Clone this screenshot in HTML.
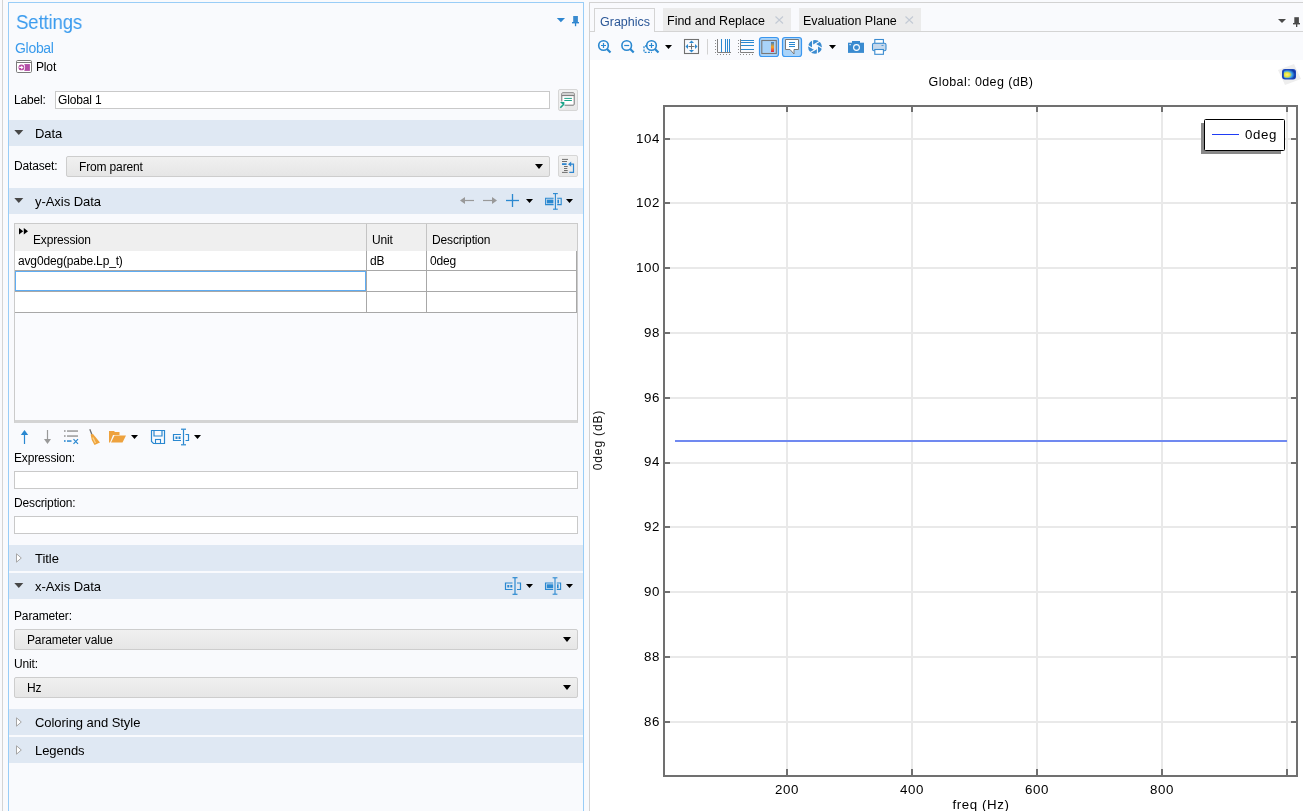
<!DOCTYPE html>
<html><head><meta charset="utf-8">
<style>
*{margin:0;padding:0;box-sizing:border-box}
html,body{width:1303px;height:811px;overflow:hidden;background:#f9fafd;font-family:"Liberation Sans",sans-serif;font-size:12px;color:#000;letter-spacing:-0.15px}
.a{position:absolute}
.t{position:absolute;white-space:nowrap;line-height:1;will-change:transform}
.hdr{position:absolute;left:9px;width:574px;height:26px;background:#dfe8f3}
.box{position:absolute;background:#fff;border:1px solid #c9c9c9}
.cmb{position:absolute;border:1px solid #cdcdcd;border-radius:2px;background:linear-gradient(#f0f0f0,#e6e6e6)}
.tri{position:absolute;width:0;height:0;border-left:4.5px solid transparent;border-right:4.5px solid transparent;border-top:5px solid #000}
.pl{font-size:13.3px;color:#000;letter-spacing:0.6px}
.hd-tri{position:absolute;width:0;height:0;border-left:5px solid transparent;border-right:5px solid transparent;border-top:6px solid #595959}
.hd-tri-r{position:absolute;width:0;height:0;border-top:5px solid transparent;border-bottom:5px solid transparent;border-left:6px solid #bdbdbd}
</style></head><body>
<!-- left outer gray line -->
<div class="a" style="left:2px;top:0;width:1px;height:811px;background:#d4d4d4"></div>
<!-- left panel -->
<div class="a" style="left:8px;top:2px;width:576px;height:830px;border:1px solid #99cdf7;background:#f9fafd"></div>
<div class="t" style="left:16px;top:11px;font-size:21px;color:#3a9bee;transform:scaleX(0.885);transform-origin:0 0">Settings</div>
<div class="t" style="left:15px;top:41px;font-size:14px;color:#3a9bec;letter-spacing:-0.3px">Global</div>
<div class="t" style="left:36px;top:61px">Plot</div>

<div class="t" style="left:14px;top:94px">Label:</div>
<div class="box" style="left:55px;top:91px;width:495px;height:18px"></div>
<div class="t" style="left:58px;top:94px">Global 1</div>

<div class="hdr" style="top:120px"></div>
<svg class="a" style="left:14px;top:129px" width="10" height="8"><path d="M0.3 1 L9.3 1 L4.8 6 Z" fill="#474747"/></svg>
<div class="t" style="left:35px;top:127px;font-size:13px;letter-spacing:-0.05px">Data</div>

<div class="t" style="left:14px;top:160px">Dataset:</div>
<div class="cmb" style="left:66px;top:156px;width:484px;height:21px"></div>
<div class="t" style="left:79px;top:161px">From parent</div>
<div class="tri" style="left:535px;top:164px"></div>

<div class="hdr" style="top:188px"></div>
<svg class="a" style="left:14px;top:197px" width="10" height="8"><path d="M0.3 1 L9.3 1 L4.8 6 Z" fill="#474747"/></svg>
<div class="t" style="left:35px;top:195px;font-size:13px;letter-spacing:-0.05px">y-Axis Data</div>


<!-- y-axis header icons -->
<svg class="a" style="left:455px;top:190px" width="125" height="22" viewBox="0 0 125 22">
 <g fill="#999" stroke="#999">
  <line x1="8" y1="10.5" x2="19" y2="10.5" stroke-width="1.2"/>
  <path d="M5 10.5 L10 7 L10 14 Z" stroke="none"/>
  <line x1="28" y1="10.5" x2="38" y2="10.5" stroke-width="1.2"/>
  <path d="M42 10.5 L37 7 L37 14 Z" stroke="none"/>
 </g>
 <g stroke="#2a88d0" stroke-width="1.3">
  <line x1="51" y1="10.5" x2="64" y2="10.5"/>
  <line x1="57.5" y1="4" x2="57.5" y2="17"/>
 </g>
 <path d="M71 9 L78 9 L74.5 13 Z" fill="#000"/>
 <g fill="none" stroke="#2a88d0" stroke-width="1.1">
  <path d="M98.6 8.3 H90.6 V14.6 H98.6"/>
  <path d="M102.2 8.3 H106.2 V14.6 H102.2"/>
  <line x1="100.4" y1="3.6" x2="100.4" y2="19.2"/>
  <line x1="98" y1="3.6" x2="102.8" y2="3.6"/>
  <line x1="98" y1="19.2" x2="102.8" y2="19.2"/>
 </g>
 <rect x="91.8" y="9.6" width="6.6" height="3.8" fill="#2a88d0"/>
 <rect x="102.4" y="9.6" width="1.6" height="3.8" fill="#2a88d0"/>
 <path d="M111 9 L118 9 L114.5 13 Z" fill="#000"/>
</svg>

<!-- table -->
<div class="a" style="left:14px;top:223px;width:564px;height:200px;border:1px solid #cbcbcb;border-bottom:3px solid #d4d4d4;background:#fafbfe"></div>
<div class="a" style="left:15px;top:224px;width:562px;height:27px;background:#efefef"></div>
<div class="a" style="left:15px;top:251px;width:562px;height:62px;background:#fff"></div>
<div class="a" style="left:366px;top:224px;width:1px;height:88px;background:#c4c4c4"></div>
<div class="a" style="left:426px;top:224px;width:1px;height:88px;background:#c4c4c4"></div>
<div class="a" style="left:576px;top:251px;width:1px;height:62px;background:#a8a8a8"></div>
<div class="a" style="left:15px;top:270px;width:562px;height:1px;background:#a8a8a8"></div>
<div class="a" style="left:15px;top:291px;width:562px;height:1px;background:#a8a8a8"></div>
<div class="a" style="left:15px;top:312px;width:562px;height:1px;background:#a8a8a8"></div>
<div class="a" style="left:366px;top:251px;width:1px;height:62px;background:#a8a8a8"></div>
<div class="a" style="left:426px;top:251px;width:1px;height:62px;background:#a8a8a8"></div>
<div class="a" style="left:15px;top:271px;width:351px;height:20px;border:1.5px solid #5eacf2;background:#fff"></div>
<svg class="a" style="left:18px;top:228px" width="12" height="8"><path d="M1 0 L5.2 3.3 L1 6.6Z M5.8 0 L10 3.3 L5.8 6.6Z" fill="#000"/></svg>
<div class="t" style="left:33px;top:234px">Expression</div>
<div class="t" style="left:372px;top:234px">Unit</div>
<div class="t" style="left:432px;top:234px">Description</div>
<div class="t" style="left:18px;top:255px">avg0deg(pabe.Lp_t)</div>
<div class="t" style="left:370px;top:255px">dB</div>
<div class="t" style="left:430px;top:255px">0deg</div>

<div class="t" style="left:14px;top:452px">Expression:</div>
<div class="box" style="left:14px;top:471px;width:564px;height:18px"></div>
<div class="t" style="left:14px;top:497px">Description:</div>
<div class="box" style="left:14px;top:516px;width:564px;height:18px"></div>

<div class="hdr" style="top:545px"></div>
<svg class="a" style="left:15px;top:553px" width="8" height="11"><path d="M1.5 0.8 L6.3 5 L1.5 9.2 Z" fill="#fff" stroke="#a6a6a6" stroke-width="1"/></svg>
<div class="t" style="left:35px;top:552px;font-size:13px;letter-spacing:-0.05px">Title</div>

<div class="hdr" style="top:573px"></div>
<svg class="a" style="left:14px;top:582px" width="10" height="8"><path d="M0.3 1 L9.3 1 L4.8 6 Z" fill="#474747"/></svg>
<div class="t" style="left:35px;top:580px;font-size:13px;letter-spacing:-0.05px">x-Axis Data</div>

<div class="t" style="left:14px;top:610px">Parameter:</div>
<div class="cmb" style="left:14px;top:629px;width:564px;height:21px"></div>
<div class="t" style="left:27px;top:634px">Parameter value</div>
<div class="tri" style="left:563px;top:637px"></div>

<div class="t" style="left:14px;top:658px">Unit:</div>
<div class="cmb" style="left:14px;top:677px;width:564px;height:21px"></div>
<div class="t" style="left:27px;top:682px">Hz</div>
<div class="tri" style="left:563px;top:685px"></div>

<div class="hdr" style="top:709px"></div>
<svg class="a" style="left:15px;top:717px" width="8" height="11"><path d="M1.5 0.8 L6.3 5 L1.5 9.2 Z" fill="#fff" stroke="#a6a6a6" stroke-width="1"/></svg>
<div class="t" style="left:35px;top:716px;font-size:13px;letter-spacing:-0.05px">Coloring and Style</div>

<div class="hdr" style="top:737px"></div>
<svg class="a" style="left:15px;top:745px" width="8" height="11"><path d="M1.5 0.8 L6.3 5 L1.5 9.2 Z" fill="#fff" stroke="#a6a6a6" stroke-width="1"/></svg>
<div class="t" style="left:35px;top:744px;font-size:13px;letter-spacing:-0.05px">Legends</div>


<!-- settings dropdown + pin -->
<svg class="a" style="left:550px;top:8px" width="36" height="24" viewBox="0 0 36 24">
 <path d="M6.8 10 L15 10 L10.9 14.2 Z" fill="#2e86d0"/>
 <rect x="23.2" y="8" width="4.7" height="6.5" fill="#3a8bd0"/>
 <rect x="22" y="14" width="7" height="1.4" fill="#2e86d0"/>
 <rect x="24.9" y="15" width="1.3" height="3.2" fill="#2e86d0"/>
</svg>
<!-- plot icon -->
<svg class="a" style="left:16px;top:60px" width="16" height="13" viewBox="0 0 16 13">
 <rect x="0.5" y="0.5" width="15" height="12" rx="1.2" fill="#fff" stroke="#7b7b7b" stroke-width="1"/>
 <line x1="0.5" y1="2.5" x2="15.5" y2="2.5" stroke="#7b7b7b" stroke-width="1"/>
 <rect x="8.3" y="4.1" width="5.6" height="6.8" fill="#b24ea6"/>
 <circle cx="5.4" cy="7.4" r="3.7" fill="#fff"/>
 <circle cx="5.4" cy="7.4" r="2.9" fill="#b6479f"/>
 <path d="M3.3 6.8 H5.2 V5.4 L7.6 7.4 L5.2 9.4 V8 H3.3 Z" fill="#fff"/>
</svg>
<!-- label button -->
<div class="a" style="left:558px;top:89px;width:20px;height:22px;border:1px solid #d6d6d6;border-radius:2px;background:linear-gradient(#f2f2f2,#e8e8e8)"></div>
<svg class="a" style="left:558px;top:89px" width="20" height="22" viewBox="0 0 20 22">
 <rect x="3.8" y="3.8" width="12.4" height="12.4" rx="1" fill="#fff" stroke="#767676" stroke-width="1"/>
 <rect x="4.3" y="4.3" width="11.4" height="2" fill="#cfcfcf"/>
 <line x1="3.8" y1="6.6" x2="16.2" y2="6.6" stroke="#767676" stroke-width="1"/>
 <line x1="6.3" y1="9.4" x2="13.9" y2="9.4" stroke="#1ca58a" stroke-width="1"/>
 <line x1="6.3" y1="11.5" x2="13.9" y2="11.5" stroke="#1ca58a" stroke-width="1"/>
 <rect x="1.5" y="12.5" width="5.5" height="7" fill="#f4f4f4"/>
 <path d="M2.3 18.8 L5 16" stroke="#1ca58a" stroke-width="1.6"/>
 <path d="M2 13 L6.3 13 L6.3 17.3 Z" fill="#1ca58a"/>
</svg>
<!-- dataset button -->
<div class="a" style="left:558px;top:155px;width:20px;height:22px;border:1px solid #d6d6d6;border-radius:2px;background:linear-gradient(#f2f2f2,#e8e8e8)"></div>
<svg class="a" style="left:558px;top:155px" width="20" height="22" viewBox="0 0 20 22">
 <g stroke="#6e6e6e" stroke-width="1">
  <line x1="4" y1="4.4" x2="10" y2="4.4"/>
  <line x1="4" y1="6.5" x2="9" y2="6.5"/>
  <line x1="6" y1="11.5" x2="9.7" y2="11.5"/>
  <line x1="6" y1="13.5" x2="9.3" y2="13.5"/>
  <line x1="6" y1="15.5" x2="9.7" y2="15.5"/>
  <line x1="4" y1="17.4" x2="9.7" y2="17.4"/>
 </g>
 <line x1="4" y1="9.1" x2="8.6" y2="9.1" stroke="#2e86d0" stroke-width="1.8"/>
 <path d="M12.5 9.2 H15.5 V17.4 H11.3" fill="none" stroke="#2e86d0" stroke-width="1.2"/>
 <path d="M10 9.2 L13.2 6.6 L13.2 11.8 Z" fill="#2e86d0"/>
</svg>

<!-- under-table icons -->
<svg class="a" style="left:15px;top:426px" width="190" height="22" viewBox="0 0 190 22">
 <path d="M9.5 4 L13.2 9 L5.8 9 Z" fill="#2a88d0"/>
 <line x1="9.5" y1="8" x2="9.5" y2="18" stroke="#2a88d0" stroke-width="1.2"/>
 <line x1="32.5" y1="4" x2="32.5" y2="14" stroke="#999" stroke-width="1.2"/>
 <path d="M32.5 18 L36 13 L29 13 Z" fill="#999"/>
 <g fill="#9a9a9a">
  <rect x="49" y="4.2" width="1.6" height="1.6"/><rect x="52" y="4.3" width="11" height="1.5"/>
  <rect x="49" y="9.2" width="1.6" height="1.6"/><rect x="52" y="9.3" width="11" height="1.5"/>
 </g>
 <g fill="#2a88d0">
  <rect x="49" y="14.2" width="1.6" height="1.6"/><rect x="52" y="14.3" width="4.5" height="1.5"/>
 </g>
 <path d="M58.5 13.2 L63 17.8 M63 13.2 L58.5 17.8" stroke="#2a88d0" stroke-width="1.2"/>
 <line x1="74.8" y1="3.3" x2="77" y2="8.8" stroke="#6e6e6e" stroke-width="1.3"/>
 <path d="M75.6 8.6 L78 8 L85 16.5 L79.5 18.9 L76.8 14 Z" fill="#efa43c"/>
 <path d="M77.8 11.5 L80.5 17" stroke="#fcd38e" stroke-width="1.3"/>
 <path d="M94 5 H99 L100 6 H104.5 V9 H98 L95 16.5 H94 Z" fill="#eea23e"/>
 <path d="M96 16.5 L99.5 9.5 H111 L107.5 16.5 Z" fill="#eea23e"/>
 <path d="M116 9 L123 9 L119.5 13 Z" fill="#000"/>
 <path d="M136.5 4.5 H149.5 V17.5 H138.5 L136.5 15.5 Z" fill="none" stroke="#2a88d0" stroke-width="1.2"/>
 <path d="M139 4.5 V10 H147 V4.5" fill="none" stroke="#2a88d0" stroke-width="1.2"/>
 <rect x="140.5" y="13.5" width="5" height="4" fill="none" stroke="#2a88d0" stroke-width="1.1"/>
 <g fill="none" stroke="#2a88d0" stroke-width="1.2">
  <path d="M166 8.5 H158.5 V14.5 H166"/>
  <path d="M170.5 8.5 H173.5 V14.5 H170.5"/>
  <line x1="168.5" y1="3.5" x2="168.5" y2="18.5"/>
  <line x1="166" y1="3.2" x2="171" y2="3.2"/>
  <line x1="166" y1="18.8" x2="171" y2="18.8"/>
 </g>
 <rect x="160.5" y="10.5" width="2" height="2.5" fill="#2a88d0"/>
 <rect x="163.5" y="10.5" width="2" height="2.5" fill="#2a88d0"/>
 <path d="M179 9 L186 9 L182.5 13 Z" fill="#000"/>
</svg>

<!-- x-axis header icons -->
<svg class="a" style="left:500px;top:575px" width="80" height="22" viewBox="0 0 80 22">
 <g fill="none" stroke="#2a88d0" stroke-width="1.2">
  <path d="M12.5 8 H5.5 V14.5 H12.5"/>
  <path d="M17 8 H20.5 V14.5 H17"/>
  <line x1="15" y1="3" x2="15" y2="19"/>
  <line x1="12.5" y1="2.7" x2="17.5" y2="2.7"/>
  <line x1="12.5" y1="19.3" x2="17.5" y2="19.3"/>
 </g>
 <rect x="7.3" y="10" width="2" height="2.5" fill="#2a88d0"/>
 <rect x="10.3" y="10" width="2" height="2.5" fill="#2a88d0"/>
 <path d="M26 9 L33 9 L29.5 13 Z" fill="#000"/>
 <g fill="none" stroke="#2a88d0" stroke-width="1.1">
  <path d="M53.2 8 H45.5 V14.4 H53.2"/>
  <path d="M56.8 8 H60.6 V14.4 H56.8"/>
  <line x1="55" y1="3" x2="55" y2="19"/>
  <line x1="52.6" y1="2.8" x2="57.4" y2="2.8"/>
  <line x1="52.6" y1="19.2" x2="57.4" y2="19.2"/>
 </g>
 <rect x="46.7" y="9.3" width="6.5" height="3.8" fill="#2a88d0"/>
 <rect x="57" y="9.3" width="1.6" height="3.8" fill="#2a88d0"/>
 <path d="M66 9 L73 9 L69.5 13 Z" fill="#000"/>
</svg>

<!-- right panel -->
<div class="a" style="left:589px;top:2px;width:720px;height:830px;border:1px solid #d2d2d2;background:#f9fafd"></div>
<svg class="a" style="left:590px;top:60px" width="713" height="751" viewBox="590 60 713 751">
<rect x="590" y="60" width="713" height="751" fill="#fff"/>
<rect x="665" y="138" width="632" height="2" fill="#e9e9e9"/>
<rect x="665" y="202" width="632" height="2" fill="#e9e9e9"/>
<rect x="665" y="267" width="632" height="2" fill="#e9e9e9"/>
<rect x="665" y="332" width="632" height="2" fill="#e9e9e9"/>
<rect x="665" y="397" width="632" height="2" fill="#e9e9e9"/>
<rect x="665" y="462" width="632" height="2" fill="#e9e9e9"/>
<rect x="665" y="526" width="632" height="2" fill="#e9e9e9"/>
<rect x="665" y="591" width="632" height="2" fill="#e9e9e9"/>
<rect x="665" y="656" width="632" height="2" fill="#e9e9e9"/>
<rect x="665" y="721" width="632" height="2" fill="#e9e9e9"/>
<rect x="786" y="107" width="2" height="668" fill="#e9e9e9"/>
<rect x="911" y="107" width="2" height="668" fill="#e9e9e9"/>
<rect x="1036" y="107" width="2" height="668" fill="#e9e9e9"/>
<rect x="1161" y="107" width="2" height="668" fill="#e9e9e9"/>
<rect x="1286" y="107" width="2" height="668" fill="#e9e9e9"/>
<rect x="675" y="440" width="612" height="2" fill="#7089f0"/>
<rect x="664" y="106" width="633" height="670" fill="none" stroke="#707070" stroke-width="2"/>
<rect x="665" y="138" width="5" height="2" fill="#707070"/>
<rect x="1291" y="138" width="6" height="2" fill="#707070"/>
<rect x="665" y="202" width="5" height="2" fill="#707070"/>
<rect x="1291" y="202" width="6" height="2" fill="#707070"/>
<rect x="665" y="267" width="5" height="2" fill="#707070"/>
<rect x="1291" y="267" width="6" height="2" fill="#707070"/>
<rect x="665" y="332" width="5" height="2" fill="#707070"/>
<rect x="1291" y="332" width="6" height="2" fill="#707070"/>
<rect x="665" y="397" width="5" height="2" fill="#707070"/>
<rect x="1291" y="397" width="6" height="2" fill="#707070"/>
<rect x="665" y="462" width="5" height="2" fill="#707070"/>
<rect x="1291" y="462" width="6" height="2" fill="#707070"/>
<rect x="665" y="526" width="5" height="2" fill="#707070"/>
<rect x="1291" y="526" width="6" height="2" fill="#707070"/>
<rect x="665" y="591" width="5" height="2" fill="#707070"/>
<rect x="1291" y="591" width="6" height="2" fill="#707070"/>
<rect x="665" y="656" width="5" height="2" fill="#707070"/>
<rect x="1291" y="656" width="6" height="2" fill="#707070"/>
<rect x="665" y="721" width="5" height="2" fill="#707070"/>
<rect x="1291" y="721" width="6" height="2" fill="#707070"/>
<rect x="786" y="107" width="2" height="5" fill="#707070"/>
<rect x="786" y="769" width="2" height="6" fill="#707070"/>
<rect x="911" y="107" width="2" height="5" fill="#707070"/>
<rect x="911" y="769" width="2" height="6" fill="#707070"/>
<rect x="1036" y="107" width="2" height="5" fill="#707070"/>
<rect x="1036" y="769" width="2" height="6" fill="#707070"/>
<rect x="1161" y="107" width="2" height="5" fill="#707070"/>
<rect x="1161" y="769" width="2" height="6" fill="#707070"/>
<rect x="1286" y="107" width="2" height="5" fill="#707070"/>
<rect x="1286" y="769" width="2" height="6" fill="#707070"/>
</svg>
<div class="t pl" style="right:643.4px;top:131.8px">104</div>
<div class="t pl" style="right:643.4px;top:195.8px">102</div>
<div class="t pl" style="right:643.4px;top:260.8px">100</div>
<div class="t pl" style="right:643.4px;top:325.8px">98</div>
<div class="t pl" style="right:643.4px;top:390.8px">96</div>
<div class="t pl" style="right:643.4px;top:454.8px">94</div>
<div class="t pl" style="right:643.4px;top:519.8px">92</div>
<div class="t pl" style="right:643.4px;top:584.8px">90</div>
<div class="t pl" style="right:643.4px;top:649.8px">88</div>
<div class="t pl" style="right:643.4px;top:714.8px">86</div>
<div class="t pl" style="left:747px;width:80px;text-align:center;top:783px">200</div>
<div class="t pl" style="left:872px;width:80px;text-align:center;top:783px">400</div>
<div class="t pl" style="left:997px;width:80px;text-align:center;top:783px">600</div>
<div class="t pl" style="left:1122px;width:80px;text-align:center;top:783px">800</div>
<div class="t pl" style="left:881px;width:200px;text-align:center;top:798px">freq (Hz)</div>
<div class="t pl" style="left:881px;width:200px;text-align:center;top:76px;font-size:12.5px;letter-spacing:0.4px">Global: 0deg (dB)</div>
<div class="t pl" style="left:548px;top:434px;width:100px;text-align:center;font-size:12px;letter-spacing:0.85px;color:#111;transform:rotate(-90deg)">0deg (dB)</div>
<div class="a" style="left:1201px;top:123px;width:80px;height:31px;background:#888"></div>
<div class="a" style="left:1204px;top:119px;width:81px;height:32px;border:1.5px solid #000;border-radius:1.5px;background:#fff"></div>
<div class="a" style="left:1212px;top:134px;width:27px;height:1px;background:#1f3cf5"></div>
<div class="t pl" style="left:1245px;top:128px">0deg</div>
<svg class="a" style="left:1276px;top:60px" width="27" height="28" viewBox="0 0 27 28">
 <path d="M2 10 L18 4 L25 19 L9 25 Z" fill="#eeeeee"/>
 <defs>
  <radialGradient id="ig" cx="0.3" cy="0.55" r="0.75"><stop offset="0" stop-color="#fff27a"/><stop offset="0.35" stop-color="#e6e23a"/><stop offset="0.6" stop-color="#3fa6ef"/><stop offset="1" stop-color="#0a2a9a"/></radialGradient>
 </defs>
 <rect x="6" y="9" width="14" height="10.5" rx="3" fill="#1c47b8"/>
 <rect x="7.8" y="10.3" width="11" height="8" rx="1.8" fill="url(#ig)"/>
</svg>

<!-- tabs -->
<div class="a" style="left:590px;top:31px;width:713px;height:1px;background:#d4d4d4"></div>
<div class="a" style="left:594px;top:8px;width:61px;height:24px;border:1px solid #d4d4d4;border-bottom:none;background:#f9fafd"></div>
<div class="t" style="left:600px;top:16px;font-size:12.5px;letter-spacing:0;color:#2b5797">Graphics</div>
<div class="a" style="left:663px;top:8px;width:128px;height:23px;background:#ebebeb"></div>
<div class="t" style="left:667px;top:15px;font-size:12.5px;letter-spacing:0">Find and Replace</div>
<svg class="a" style="left:775px;top:16px" width="9" height="8"><path d="M0.5 0.5 L8 7.5 M8 0.5 L0.5 7.5" stroke="#c3cad4" stroke-width="1.1"/></svg>
<div class="a" style="left:799px;top:8px;width:122px;height:23px;background:#ebebeb"></div>
<div class="t" style="left:803px;top:15px;font-size:12.5px;letter-spacing:0">Evaluation Plane</div>
<svg class="a" style="left:905px;top:16px" width="9" height="8"><path d="M0.5 0.5 L8 7.5 M8 0.5 L0.5 7.5" stroke="#c3cad4" stroke-width="1.1"/></svg>
<svg class="a" style="left:1275px;top:14px" width="28" height="16" viewBox="0 0 28 16">
 <path d="M3 5 L11 5 L7 9 Z" fill="#4a4a4a"/>
 <rect x="19.3" y="3.2" width="4.6" height="6.3" fill="#4a4a4a"/>
 <rect x="18" y="9" width="7" height="1.4" fill="#4a4a4a"/>
 <rect x="21" y="10" width="1.3" height="3" fill="#4a4a4a"/>
</svg>

<!-- graphics toolbar -->
<svg class="a" style="left:590px;top:32px" width="310" height="28" viewBox="590 32 310 28">
 <g stroke="#2a88d0" fill="none" stroke-width="1.6">
  <circle cx="603.5" cy="45.5" r="4.8"/>
  <line x1="607" y1="49" x2="610.5" y2="52.5" stroke-width="2.2"/>
  <path d="M601 45.5 H606 M603.5 43 V48" stroke-width="1.2"/>
  <circle cx="626.7" cy="45.5" r="4.8"/>
  <line x1="630.2" y1="49" x2="633.7" y2="52.5" stroke-width="2.2"/>
  <path d="M624.2 45.5 H629.2" stroke-width="1.2"/>
  <circle cx="651.5" cy="45.5" r="4.8"/>
  <line x1="655" y1="49" x2="658.5" y2="52.5" stroke-width="2.2"/>
  <path d="M649 45.5 H654 M651.5 43 V48" stroke-width="1.2"/>
  <path d="M647 46 H644 V52.3 H652" stroke-width="1.3" stroke-dasharray="2 1.3"/>
 </g>
 <path d="M665 45 L672 45 L668.5 49 Z" fill="#000"/>
 <rect x="684.5" y="39.5" width="14" height="14" fill="none" stroke="#707070" stroke-width="1.1"/>
 <path d="M688.5 46.5 H694.5 M691.5 43.5 V49.5" stroke="#707070" stroke-width="1"/>
 <g fill="#2a88d0">
  <path d="M691.5 40.5 L694 43 L689 43 Z"/><path d="M691.5 52.5 L694 50 L689 50 Z"/>
  <path d="M685.5 46.5 L688 44 L688 49 Z"/><path d="M697.5 46.5 L695 44 L695 49 Z"/>
 </g>
 <rect x="707" y="39" width="1" height="15.5" fill="#d2d2d2"/>
 <!-- grid icon 1 -->
 <g fill="#8a8a8a">
  <rect x="715" y="40" width="1" height="1"/><rect x="715" y="43" width="1" height="1"/><rect x="715" y="46" width="1" height="1"/><rect x="715" y="49" width="1" height="1"/><rect x="715" y="52" width="1" height="1"/>
  <rect x="717" y="54" width="1" height="1"/><rect x="720" y="54" width="1" height="1"/><rect x="723" y="54" width="1" height="1"/><rect x="726" y="54" width="1" height="1"/><rect x="729" y="54" width="1" height="1"/>
 </g>
 <path d="M717.5 39 V52.5 H731" fill="none" stroke="#808080" stroke-width="1"/>
 <g stroke="#2a88d0" stroke-width="1"><line x1="721.5" y1="39" x2="721.5" y2="52"/><line x1="725.5" y1="39" x2="725.5" y2="52"/><line x1="727.5" y1="39" x2="727.5" y2="52"/><line x1="729.5" y1="39" x2="729.5" y2="52"/></g>
 <!-- grid icon 2 -->
 <g fill="#8a8a8a">
  <rect x="738" y="40" width="1" height="1"/><rect x="738" y="43" width="1" height="1"/><rect x="738" y="46" width="1" height="1"/><rect x="738" y="49" width="1" height="1"/><rect x="738" y="52" width="1" height="1"/>
  <rect x="740" y="54" width="1" height="1"/><rect x="743" y="54" width="1" height="1"/><rect x="746" y="54" width="1" height="1"/><rect x="749" y="54" width="1" height="1"/><rect x="752" y="54" width="1" height="1"/>
 </g>
 <path d="M740.5 39 V52.5 H754" fill="none" stroke="#808080" stroke-width="1"/>
 <g stroke="#2a88d0" stroke-width="1"><line x1="741" y1="40.5" x2="754" y2="40.5"/><line x1="741" y1="42.5" x2="754" y2="42.5"/><line x1="741" y1="45.5" x2="754" y2="45.5"/><line x1="741" y1="49.5" x2="754" y2="49.5"/></g>
 <!-- toggle 1 -->
 <rect x="759.5" y="37.5" width="19" height="19" rx="2.5" fill="#a9d3f9" stroke="#3a97f0" stroke-width="1.2"/>
 <rect x="761.8" y="40.5" width="14.5" height="13" fill="none" stroke="#787878" stroke-width="1.1"/>
 <defs><linearGradient id="cb" x1="0" y1="0" x2="0" y2="1"><stop offset="0" stop-color="#3a7fc0"/><stop offset="0.5" stop-color="#f5a623"/><stop offset="1" stop-color="#e0204a"/></linearGradient></defs>
 <rect x="771" y="42" width="3" height="10" fill="url(#cb)"/>
 <!-- toggle 2 -->
 <rect x="782.5" y="37.5" width="19" height="19" rx="2.5" fill="#a9d3f9" stroke="#3a97f0" stroke-width="1.2"/>
 <path d="M785.5 39.5 H798.5 V49.5 H794 L794 54 L790 49.5 H785.5 Z" fill="#fff" stroke="#787878" stroke-width="1"/>
 <g stroke="#2a88d0" stroke-width="1"><line x1="789" y1="42.5" x2="795" y2="42.5"/><line x1="789" y1="44.5" x2="795" y2="44.5"/><line x1="789" y1="46.5" x2="795" y2="46.5"/></g>
 <!-- aperture -->
 <g transform="translate(815 46.9)">
  <circle r="6.9" fill="#3a8bd0"/>
  <polygon points="2.42,1.40 0.00,2.80 -2.42,1.40 -2.42,-1.40 -0.00,-2.80 2.42,-1.40" fill="#f9fafd"/>
  <g stroke="#f9fafd" stroke-width="1.1"><line x1="2.42" y1="-1.40" x2="2.42" y2="7.40"/><line x1="2.42" y1="1.40" x2="-5.20" y2="5.80"/><line x1="0.00" y1="2.80" x2="-7.62" y2="-1.60"/><line x1="-2.42" y1="1.40" x2="-2.42" y2="-7.40"/><line x1="-2.42" y1="-1.40" x2="5.20" y2="-5.80"/><line x1="-0.00" y1="-2.80" x2="7.62" y2="1.60"/></g>
 </g>
 <path d="M829 45 L836 45 L832.5 49 Z" fill="#000"/>
 <!-- camera -->
 <rect x="848" y="42.7" width="16" height="10.2" fill="#3a8bd0"/>
 <rect x="852" y="41" width="8" height="2" fill="#3a8bd0"/>
 <circle cx="856.5" cy="47.5" r="2.9" fill="#3a8bd0" stroke="#fff" stroke-width="1.1"/>
 <rect x="849.5" y="44" width="1.2" height="1.2" fill="#fff"/>
 <!-- printer -->
 <rect x="874.8" y="39.5" width="8.6" height="4" fill="#fff" stroke="#3a8bd0" stroke-width="1.1"/>
 <rect x="872.5" y="43.2" width="13.5" height="7.6" rx="1.5" fill="#c5d8ec" stroke="#3a8bd0" stroke-width="1.1"/>
 <rect x="874.8" y="49.5" width="8.6" height="4.8" fill="#fff" stroke="#3a8bd0" stroke-width="1.1"/>
 <rect x="881.5" y="45" width="2" height="0.8" fill="#3a8bd0"/>
</svg>

</body></html>
